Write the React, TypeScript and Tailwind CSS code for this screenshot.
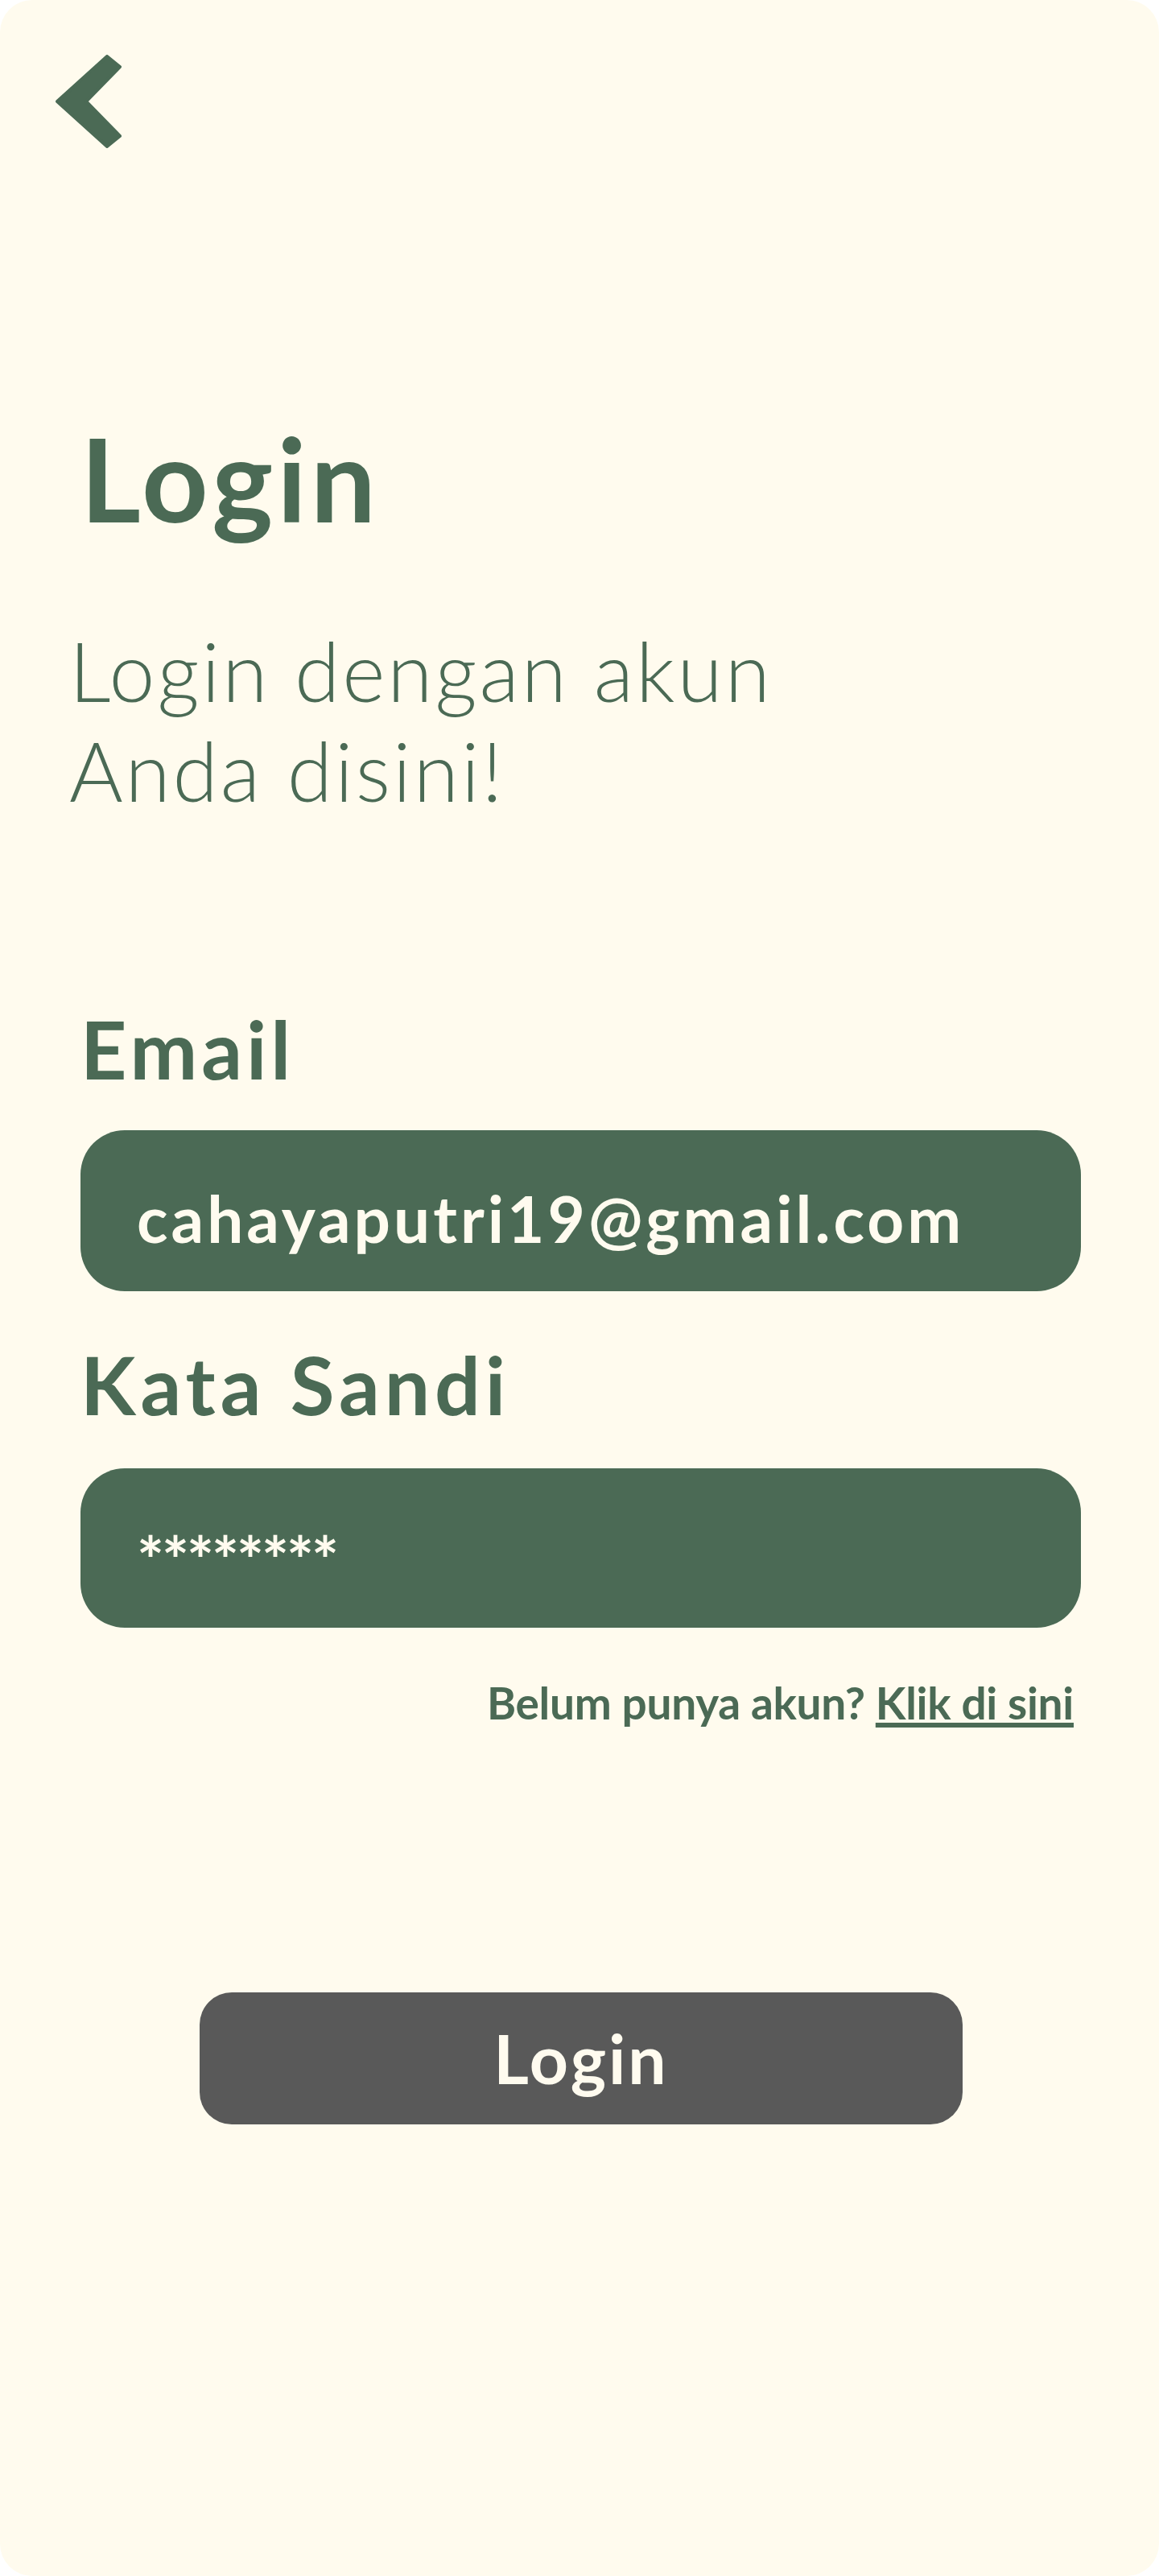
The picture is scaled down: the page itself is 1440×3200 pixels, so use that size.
export default function App() {
  return (
    <div className="w-[1440px] h-[3200px] bg-white" style={{ fontFamily: "Lato, 'Noto Sans', sans-serif" }}>
      <div className="h-full w-full rounded-[40px] bg-[#fffbee] text-[#4b6a55] flex flex-col">
        {/* back button */}
        <button className="ml-[69px] mt-[68px] w-[82px] h-[116px] self-start">
          <svg viewBox="0 0 82 116" width="82" height="116">
            <polygon
              points="2,58 64,2 80,15 38,58 80,101 64,114"
              fill="#4b6a55"
              stroke="#4b6a55"
              strokeWidth="4"
              strokeLinejoin="round"
            />
          </svg>
        </button>

        <h1 className="mt-[338px] ml-[100px] text-[144px] font-bold leading-none tracking-[5px]">Login</h1>

        <p className="mt-[105px] ml-[86px] text-[102px] font-light leading-[124px] tracking-[3px]">
          Login dengan akun
          <br />
          Anda disini!
        </p>

        <div className="mt-[233px] ml-[100px] mr-[97px] flex flex-col">
          <label className="text-[100px] font-bold leading-none tracking-[5px]">Email</label>
          <div className="mt-[52px] h-[200px] rounded-[55px] bg-[#4b6a55] flex items-center pl-[70px] pt-[18px]">
            <span className="text-[80px] font-bold leading-none tracking-[4px] text-[#fffbef]">
              cahayaputri19@gmail.com
            </span>
          </div>

          <label className="mt-[65px] text-[100px] font-bold leading-none tracking-[6px]">Kata Sandi</label>
          <div className="mt-[55px] h-[198px] rounded-[55px] bg-[#4b6a55] flex items-center pl-[70px]">
            <span className="text-[80px] font-bold leading-none tracking-[-3px] text-[#fffbef] pt-[28px]">********</span>
          </div>

          <p className="mt-[66px] self-end mr-[9px] text-[55px] font-bold leading-none tracking-[-0.3px]">
            Belum punya akun?{" "}
            <a href="#" className="underline decoration-[6px] underline-offset-[4px]">
              Klik di sini
            </a>
          </p>
        </div>

        <button className="mt-[332px] ml-[248px] w-[948px] h-[164px] rounded-[40px] bg-[#595959] text-[#fffbef] text-[84px] font-bold leading-none tracking-[3px] flex items-center justify-center">
          Login
        </button>
      </div>
    </div>
  );
}
